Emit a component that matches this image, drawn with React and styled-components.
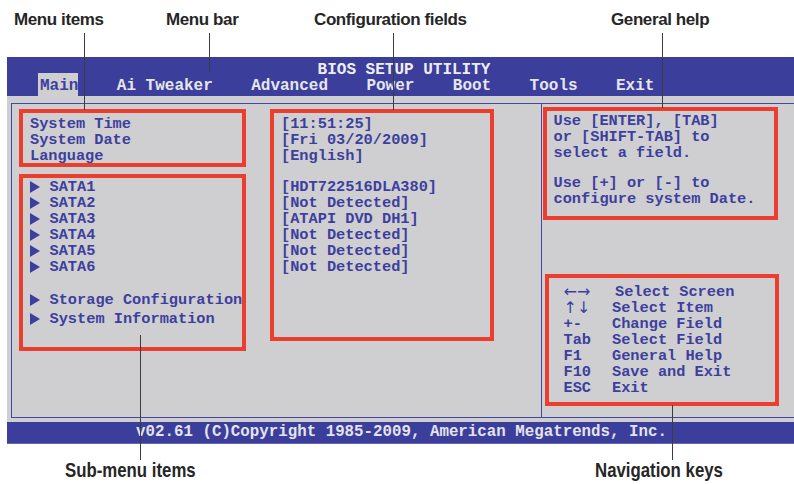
import styled, { createGlobalStyle } from 'styled-components';

const GlobalStyle = createGlobalStyle`
    body {
        margin: 0;
        background: #FFFFFF;
    }
`

const Page = styled.div`
    position: relative;
    width: 794px;
    height: 484px;
    overflow: hidden;
    background: #FFFFFF;
    padding-top: 57px;
    box-sizing: border-box;
`

const Screen = styled.div`
    margin-left: 7px;
    width: 787px;
    font-family: "Liberation Mono", "Courier New", monospace;
    font-weight: bold;
`

const TopBar = styled.div`
    height: 39px;
    box-sizing: border-box;
    padding-top: 5px;
    background: #3b3e9b;
`

const Title = styled.div`
    font-size: 16px;
    line-height: 16px;
    text-align: center;
    padding-left: 7px;
    color: #eeeef2;
    white-space: pre;
`

const MenuRow = styled.div`
    display: flex;
    gap: 38.4px;
    padding-left: 33px;
    height: 18px;
    font-size: 16px;
    line-height: 16px;
`

const MenuItem = styled.div`
    white-space: pre;
    color: ${props => props.active ? "#3d3f9f" : "#e6e6ec"};
    ${props => props.active ? `
        background: #cfcfd1;
        padding: 5px 0 2px 2px;
        margin: -5px 0 0 -2px;
    ` : ""}
`

const Body = styled.div`
    height: 326px;
    box-sizing: border-box;
    padding: 7px 0 4px 4px;
    background: #cfcfd1;
`

const Frame = styled.div`
    height: 100%;
    box-sizing: border-box;
    display: flex;
    border: 1.5px solid #4646a6;
    border-right: none;
`

const LeftPanel = styled.div`
    width: 530px;
    flex-shrink: 0;
    display: flex;
    gap: 24px;
    padding: 4.5px 0 0 6.5px;
    box-sizing: border-box;
    border-right: 1.5px solid #4646a6;
`

const Column = styled.div`
    display: flex;
    flex-direction: column;
    gap: 7px;
`

const RightPanel = styled.div`
    flex: 1;
    display: flex;
    flex-direction: column;
    justify-content: space-between;
    padding: 2.5px 0 11px 0.5px;
`

const RedBox = styled.div`
    box-sizing: border-box;
    width: ${props => props.w}px;
    height: ${props => props.h}px;
    padding: ${props => props.pad};
    margin-left: ${props => props.ml || 0}px;
    border: 4px solid #ec3e2f;
`

const Line = styled.div`
    font-size: 15.3px;
    line-height: 16px;
    height: 16px;
    color: #3d3f9f;
    white-space: pre;
`

const Gap = styled.div`
    height: ${props => props.h}px;
`

const SubItem = styled.div`
    display: flex;
    align-items: center;
    font-size: 15.3px;
    line-height: 16px;
    height: 16px;
    color: #3d3f9f;
    white-space: pre;
    margin-bottom: ${props => props.mb || 0}px;
`

const Arrow = styled.span`
    width: 0;
    height: 0;
    margin: 0 10px 0 7px;
    border-left: 10px solid #3d3f9f;
    border-top: 6px solid transparent;
    border-bottom: 6px solid transparent;
`

const NavRow = styled.div`
    display: flex;
    font-size: 15.3px;
    line-height: 16px;
    height: 16px;
    color: #3d3f9f;
    white-space: pre;
`

const NavKey = styled.span`
    width: 48.5px;
    flex-shrink: 0;
    ${props => props.thin ? `
        font-family: "DejaVu Sans", sans-serif;
        font-weight: normal;
        font-size: 16px;
    ` : ""}
`

const NavDesc = styled.span`
    padding-left: ${props => props.shift || 0}px;
`

const Footer = styled.div`
    height: 21px;
    background: #3b3e9b;
    border-bottom: 1px solid #6668b4;
    color: #e4e4ec;
    font-size: 15.8px;
    line-height: 21px;
    text-align: center;
    white-space: pre;
    padding-left: 2px;
`

const Label = styled.div`
    position: absolute;
    left: ${props => props.x}px;
    top: ${props => props.y}px;
    font-family: "Liberation Sans", Arial, sans-serif;
    font-weight: bold;
    color: #262626;
    white-space: nowrap;
    font-size: ${props => props.big ? "21px" : "17px"};
    line-height: ${props => props.big ? "24px" : "20px"};
    letter-spacing: ${props => props.big ? "0" : "-0.4px"};
    transform-origin: left top;
    transform: ${props => props.big ? "scaleX(0.8)" : "none"};
`

const Leader = styled.div`
    position: absolute;
    left: ${props => props.x}px;
    top: ${props => props.y1}px;
    height: ${props => props.y2 - props.y1}px;
    width: 1.4px;
    background: #3c3c3c;
`

const menus = ['Main', 'Ai Tweaker', 'Advanced', 'Power', 'Boot', 'Tools', 'Exit'];
const sata = ['SATA1', 'SATA2', 'SATA3', 'SATA4', 'SATA5', 'SATA6'];
const drives = ['[HDT722516DLA380]', '[Not Detected]', '[ATAPI DVD DH1]', '[Not Detected]', '[Not Detected]', '[Not Detected]'];
const navKeys = [
    ['←→', 'Select Screen', 3, true],
    ['↑↓', 'Select Item', 0, true],
    ['+-', 'Change Field'],
    ['Tab', 'Select Field'],
    ['F1', 'General Help'],
    ['F10', 'Save and Exit'],
    ['ESC', 'Exit'],
];

const callouts = [
    { text: 'Menu items', x: 14, y: 10, lx: 84, y1: 33, y2: 110 },
    { text: 'Menu bar', x: 166, y: 10, lx: 209, y1: 33, y2: 72 },
    { text: 'Configuration fields', x: 314, y: 10, lx: 393, y1: 33, y2: 110 },
    { text: 'General help', x: 611, y: 10, lx: 662, y1: 33, y2: 108 },
    { text: 'Sub-menu items', x: 65, y: 458, lx: 140, y1: 335, y2: 460, big: true },
    { text: 'Navigation keys', x: 595, y: 458, lx: 672, y1: 405, y2: 460, big: true },
];

function App() {
    return (
        <>
            <GlobalStyle />
            <Page>
                <Screen>
                    <TopBar>
                        <Title>BIOS SETUP UTILITY</Title>
                        <MenuRow>
                            {menus.map((m, i) => (
                                <MenuItem key={m} active={i === 0}>{m}</MenuItem>
                            ))}
                        </MenuRow>
                    </TopBar>
                    <Body>
                        <Frame>
                            <LeftPanel>
                                <Column>
                                    <RedBox w={227} h={58} pad="3px 0 0 7.5px">
                                        <Line>System Time</Line>
                                        <Line>System Date</Line>
                                        <Line>Language</Line>
                                    </RedBox>
                                    <RedBox w={227} h={177} pad="1px 0 0 0">
                                        {sata.map((s) => (
                                            <SubItem key={s}><Arrow />{s}</SubItem>
                                        ))}
                                        <Gap h={17} />
                                        <SubItem mb={3}><Arrow />Storage Configuration</SubItem>
                                        <SubItem><Arrow />System Information</SubItem>
                                    </RedBox>
                                </Column>
                                <RedBox w={224} h={232} pad="3px 0 0 7.5px">
                                    <Line>[11:51:25]</Line>
                                    <Line>[Fri 03/20/2009]</Line>
                                    <Line>[English]</Line>
                                    <Gap h={15} />
                                    {drives.map((d, i) => (
                                        <Line key={i}>{d}</Line>
                                    ))}
                                </RedBox>
                            </LeftPanel>
                            <RightPanel>
                                <RedBox w={235} h={113} pad="2px 0 0 7px">
                                    <Line>Use [ENTER], [TAB]</Line>
                                    <Line>or [SHIFT-TAB] to</Line>
                                    <Line>select a field.</Line>
                                    <Gap h={14} />
                                    <Line>Use [+] or [-] to</Line>
                                    <Line>configure system Date.</Line>
                                </RedBox>
                                <RedBox w={234} h={132} ml={2} pad="6px 0 0 15px">
                                    {navKeys.map(([k, d, shift, thin]) => (
                                        <NavRow key={k}>
                                            <NavKey thin={thin}>{k}</NavKey>
                                            <NavDesc shift={shift}>{d}</NavDesc>
                                        </NavRow>
                                    ))}
                                </RedBox>
                            </RightPanel>
                        </Frame>
                    </Body>
                    <Footer>v02.61 (C)Copyright 1985-2009, American Megatrends, Inc.</Footer>
                </Screen>
                {callouts.map((c) => (
                    <div key={c.text}>
                        <Leader x={c.lx} y1={c.y1} y2={c.y2} />
                        <Label x={c.x} y={c.y} big={c.big}>{c.text}</Label>
                    </div>
                ))}
            </Page>
        </>
    );
}

export default App;
